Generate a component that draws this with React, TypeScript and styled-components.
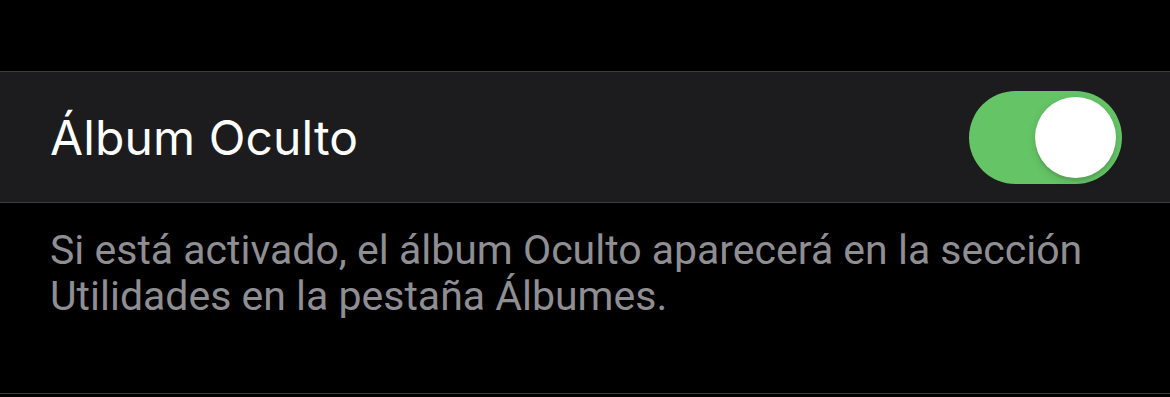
import React, { useState } from 'react'
import styled, { createGlobalStyle } from 'styled-components'

const GlobalStyle = createGlobalStyle`
    html, body {
        margin: 0;
        padding: 0;
        background: #000000;
    }
    body {
        font-family: 'Inter', 'Roboto', sans-serif;
        -webkit-font-smoothing: antialiased;
    }
`

const Page = styled.div`
    width: 1170px;
    height: 397px;
    overflow: hidden;
    background: #000000;
    padding-top: 71px;
    box-sizing: border-box;
`

const Group = styled.div`
    background: #1c1c1e;
    border-top: 1px solid #3d3d41;
    border-bottom: 1px solid #3d3d41;
`

const Row = styled.div`
    display: flex;
    align-items: center;
    justify-content: space-between;
    height: 130px;
    padding: 0 48px 0 50px;
`

const Label = styled.span`
    color: #ffffff;
    font-size: 48px;
    font-weight: 400;
    letter-spacing: 0.1px;
`

const Track = styled.button<{ $on: boolean }>`
    position: relative;
    width: 153px;
    height: 93px;
    border: none;
    padding: 0;
    border-radius: 47px;
    background: ${p => (p.$on ? '#65c466' : '#39393d')};
    cursor: pointer;
    transition: background 0.2s;
`

const Knob = styled.span<{ $on: boolean }>`
    position: absolute;
    top: 6px;
    left: ${p => (p.$on ? '66px' : '6px')};
    width: 81px;
    height: 81px;
    border-radius: 50%;
    background: #ffffff;
    box-shadow: 0 3px 8px rgba(0, 0, 0, 0.15), 0 3px 1px rgba(0, 0, 0, 0.06);
    transition: left 0.2s;
`

const Footer = styled.div`
    padding: 24px 50px 0 50px;
    height: 191px;
    box-sizing: border-box;
    border-bottom: 1px solid #3d3d41;
`

const FooterText = styled.p`
    margin: 0;
    color: #8e8e93;
    font-size: 41px;
    line-height: 46px;
    font-family: 'Roboto', sans-serif;
`

const App: React.FC = () => {
    const [on, setOn] = useState(true)

    return (
        <Page>
            <GlobalStyle />
            <Group>
                <Row>
                    <Label>Álbum Oculto</Label>
                    <Track $on={on} onClick={() => setOn(!on)} aria-label="Álbum Oculto">
                        <Knob $on={on} />
                    </Track>
                </Row>
            </Group>
            <Footer>
                <FooterText>
                    Si está activado, el álbum Oculto aparecerá en la sección
                    <br />
                    Utilidades en la pestaña Álbumes.
                </FooterText>
            </Footer>
        </Page>
    )
}

export default App
